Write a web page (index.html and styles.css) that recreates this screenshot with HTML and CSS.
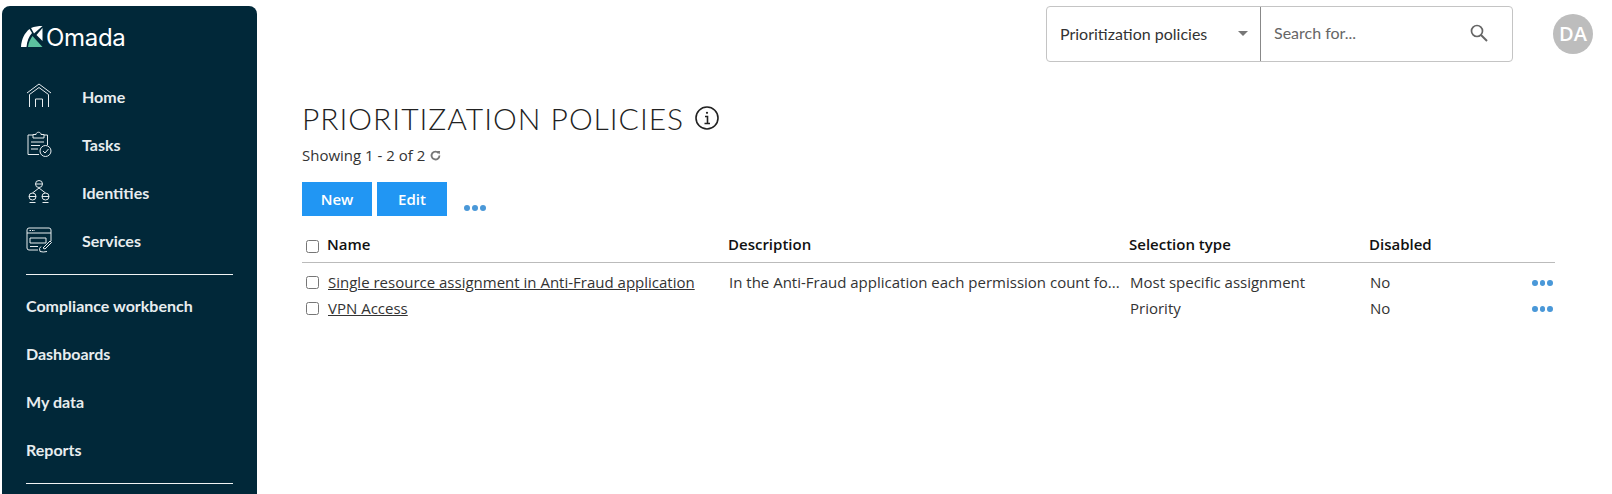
FILE: index.html
```html
<!DOCTYPE html>
<html lang="en">
<head>
    <meta charset="UTF-8">
    <meta name="viewport" content="width=device-width, initial-scale=1.0">
    <title>Prioritization policies - Omada</title>
    <link rel="stylesheet" href="styles.css">
</head>
<body>
    <div class="layout">
        <aside class="sidebar">
            <div class="logo">
                <svg class="logo-mark" viewBox="0 0 22 22" width="22" height="22">
                    <path d="M0 21 C0.500 13 3.500 7 8.500 3 L11 7 C8 10.500 6 15 5.500 21 Z" fill="#fff"/>
                    <path d="M10 2 C13.500 0.600 17.500 0 21.500 0 L13 7.500 Z" fill="#fff"/>
                    <path d="M15.500 9 L21.500 2 L21.500 15 Z" fill="#fff"/>
                    <path d="M7 21 C7.500 17 9 13.500 11.500 10 L21.500 21 Z" fill="#5cc2a0"/>
                </svg>
                <span class="logo-text">Omada</span>
            </div>
            <nav>
                <a class="nav-item">
                    <svg class="nav-icon" viewBox="0 0 26 26" fill="none" stroke="#e8edef" stroke-width="1">
                        <path d="M1 10 L13 1 L25 10"/>
                        <path d="M3.500 24 V11.500 L13 4.500 L22.500 11.500 V24"/>
                        <path d="M9.500 24 V16 H16.500 V24"/>
                    </svg>
                    <span>Home</span>
                </a>
                <a class="nav-item">
                    <svg class="nav-icon" viewBox="0 0 26 26" fill="none" stroke="#e8edef" stroke-width="1">
                        <path d="M7 4 H2 V23.500 H13"/>
                        <path d="M18 4 H21.500 V14"/>
                        <path d="M7 7 V3.500 H10 C10 0.500 15 0.500 15 3.500 H18 V7 Z"/>
                        <path d="M5 11 H18 M5 14.500 H14 M5 18 H12"/>
                        <circle cx="19.500" cy="20" r="5.500"/>
                        <path d="M17 20 L19 22 L22.500 18"/>
                    </svg>
                    <span>Tasks</span>
                </a>
                <a class="nav-item">
                    <svg class="nav-icon" viewBox="0 0 26 26" fill="none" stroke="#e8edef" stroke-width="1">
                        <circle cx="13" cy="5" r="3.500"/>
                        <path d="M9.500 5 H16.500 M13 9 L6.500 14 M13 9 L19.500 14"/>
                        <circle cx="6.500" cy="17.500" r="3.500"/>
                        <path d="M3 17.500 H10 M3.500 23.500 H9.500"/>
                        <circle cx="19.500" cy="17.500" r="3.500"/>
                        <path d="M16 17.500 H23 M16.500 23.500 H22.500"/>
                    </svg>
                    <span>Identities</span>
                </a>
                <a class="nav-item">
                    <svg class="nav-icon" viewBox="0 0 26 26" fill="none" stroke="#e8edef" stroke-width="1">
                        <path d="M12 23 H3 Q1 23 1 21 V3 Q1 1 3 1 H23 Q25 1 25 3 V14"/>
                        <path d="M1 6 H25"/>
                        <path d="M3.500 3.500 H9" stroke-dasharray="1.500 1"/>
                        <path d="M4 11 H20 V16 H4 Z"/>
                        <path d="M4 19.500 H12"/>
                        <path d="M17 21 L24 14 L25.500 15.500 L19 22 Z"/>
                        <path d="M14 24.500 Q12.500 21 15 19.500 M21 24.500 Q17 25.500 14 24.500"/>
                    </svg>
                    <span>Services</span>
                </a>
                <div class="nav-divider"></div>
                <a class="nav-item plain">Compliance workbench</a>
                <a class="nav-item plain">Dashboards</a>
                <a class="nav-item plain">My data</a>
                <a class="nav-item plain">Reports</a>
                <div class="nav-divider"></div>
            </nav>
        </aside>

        <main class="content">
            <div class="topbar">
                <div class="search-box">
                    <div class="search-scope">
                        <span>Prioritization policies</span>
                        <span class="caret"></span>
                    </div>
                    <div class="search-input">
                        <span>Search for...</span>
                        <svg viewBox="0 0 18 18" width="18" height="18" fill="none" stroke="#666" stroke-width="1.700">
                            <circle cx="7" cy="7" r="5.500"/>
                            <path d="M11 11 L17 17" stroke-width="2"/>
                        </svg>
                    </div>
                </div>
                <div class="avatar">DA</div>
            </div>

            <h1 class="page-title">
                PRIORITIZATION POLICIES
                <svg viewBox="0 0 24 24" width="24" height="24" fill="none" stroke="#222" stroke-width="1.600">
                    <circle cx="12" cy="12" r="11"/>
                    <path d="M10 10.500 H12.500 V17.500 M9.500 17.500 H15"/>
                    <circle cx="12" cy="6.800" r="1.100" fill="#222" stroke="none"/>
                </svg>
            </h1>
            <p class="result-count">
                Showing 1 - 2 of 2
                <svg viewBox="0 0 12 12" width="11" height="11" fill="none" stroke="#777" stroke-width="2">
                    <path d="M9.500 3.500 A4.300 4.300 0 1 0 10.300 6"/>
                    <path d="M7.500 1 L11 1 L10.500 4.800 Z" fill="#777" stroke="none"/>
                </svg>
            </p>

            <div class="actions">
                <button class="btn">New</button>
                <button class="btn">Edit</button>
                <span class="dots more"><i></i><i></i><i></i></span>
            </div>

            <div class="grid-row head">
                <input type="checkbox" class="check">
                <span class="name-head">Name</span>
                <span>Description</span>
                <span>Selection type</span>
                <span>Disabled</span>
                <span></span>
            </div>
            <div class="grid-row item first">
                <input type="checkbox" class="check">
                <a class="link">Single resource assignment in Anti-Fraud application</a>
                <span>In the Anti-Fraud application each permission count fo...</span>
                <span>Most specific assignment</span>
                <span>No</span>
                <span class="dots"><i></i><i></i><i></i></span>
            </div>
            <div class="grid-row item">
                <input type="checkbox" class="check">
                <a class="link">VPN Access</a>
                <span></span>
                <span>Priority</span>
                <span>No</span>
                <span class="dots"><i></i><i></i><i></i></span>
            </div>
        </main>
    </div>
</body>
</html>
```

FILE: styles.css
```css
:root {
    --navy: #012839;
    --blue: #2196f3;
    --dots: #4a98d8;
    --text: #333;
}

html, body {
    margin: 0;
    height: 100%;
    overflow: hidden;
    background: white;
}

body {
    font-family: 'Open Sans', sans-serif;
    font-size: 15px;
    color: var(--text);
}

.layout {
    display: flex;
    height: 100%;
    overflow: hidden;
}

/* Sidebar */
.sidebar {
    flex: 0 0 255px;
    margin: 6px 0 0 2px;
    background: var(--navy);
    border-radius: 8px 8px 0 0;
    font-family: 'Lato', sans-serif;
    color: #e8edef;
}

.logo {
    display: flex;
    align-items: center;
    gap: 3px;
    height: 22px;
    padding: 20px 0 0 19px;
}

.logo-text {
    font-family: 'Inter', sans-serif;
    font-size: 24px;
    font-weight: 400;
    color: white;
    letter-spacing: -0.3px;
}

nav {
    padding-top: 24px;
}

.nav-item {
    display: flex;
    align-items: center;
    height: 48px;
    padding-left: 24px;
    font-size: 16px;
    font-weight: 700;
}

.nav-icon {
    width: 26px;
    height: 26px;
    margin-right: 30px;
}

.nav-divider {
    height: 1px;
    margin: 10px 24px 6px 24px;
    background: #f0f3f4;
}

/* Main area */
.content {
    flex: 1;
    min-width: 0;
    padding: 0 57px 0 45px;
}

.topbar {
    display: flex;
    justify-content: flex-end;
    align-items: center;
    gap: 40px;
    margin-right: -38px;
    padding-top: 6px;
}

.search-box {
    display: flex;
    width: 467px;
    height: 56px;
    box-sizing: border-box;
    border: 1px solid #c4c4c4;
    border-radius: 4px;
    font-family: 'Lato', sans-serif;
    font-size: 16px;
}

.search-scope {
    display: flex;
    align-items: center;
    justify-content: space-between;
    width: 214px;
    padding: 0 12px 2px 13px;
    box-sizing: border-box;
    border-right: 1px solid #888;
    color: #333;
}

.caret {
    width: 0;
    height: 0;
    border-left: 5px solid transparent;
    border-right: 5px solid transparent;
    border-top: 5px solid #777;
}

.search-input {
    flex: 1;
    display: flex;
    align-items: center;
    justify-content: space-between;
    padding: 0 24px 3px 13px;
    color: #666;
}

.avatar {
    width: 40px;
    height: 40px;
    border-radius: 50%;
    background: #bdbdbd;
    color: white;
    font-size: 20px;
    font-weight: 600;
    line-height: 40px;
    text-align: center;
}

.page-title {
    display: flex;
    align-items: center;
    gap: 11px;
    margin: 38px 0 0;
    height: 36px;
    font-family: 'Lato', sans-serif;
    font-size: 30px;
    font-weight: 300;
    color: #222;
    letter-spacing: 1px;
}

.result-count {
    display: flex;
    align-items: center;
    gap: 5px;
    margin: 9px 0 0;
    height: 20px;
}

.actions {
    display: flex;
    align-items: flex-start;
    gap: 5px;
    margin-top: 17px;
}

.btn {
    width: 70px;
    height: 34px;
    padding: 0;
    border: none;
    background: var(--blue);
    color: white;
    font-family: inherit;
    font-size: 15px;
    font-weight: 600;
}

.dots {
    display: flex;
    gap: 2px;
    align-items: center;
    justify-content: flex-end;
}

.dots i {
    width: 6px;
    height: 6px;
    border-radius: 50%;
    background: var(--dots);
}

.more {
    margin: 23px 0 0 12px;
}

/* Table */
.grid-row {
    display: grid;
    grid-template-columns: 26px 400px 401px 240px 1fr 24px;
    align-items: center;
}

.grid-row.head {
    height: 37px;
    margin-top: 9px;
    border-bottom: 1px solid #bbb;
    color: #111;
    font-weight: 600;
}

.grid-row.head .check {
    margin-top: 6px;
}

.name-head {
    margin-left: -1px;
}

.grid-row.item {
    height: 26px;
}

.grid-row.item > span:nth-child(n+3) {
    padding-left: 1px;
}

.grid-row.item > .dots {
    padding: 2px 2px 0 0;
}

.grid-row.first {
    margin-top: 6px;
}

.check {
    width: 13px;
    height: 13px;
    margin: 0 0 0 4px;
}

.link {
    color: var(--text);
    text-decoration: underline;
}
```
